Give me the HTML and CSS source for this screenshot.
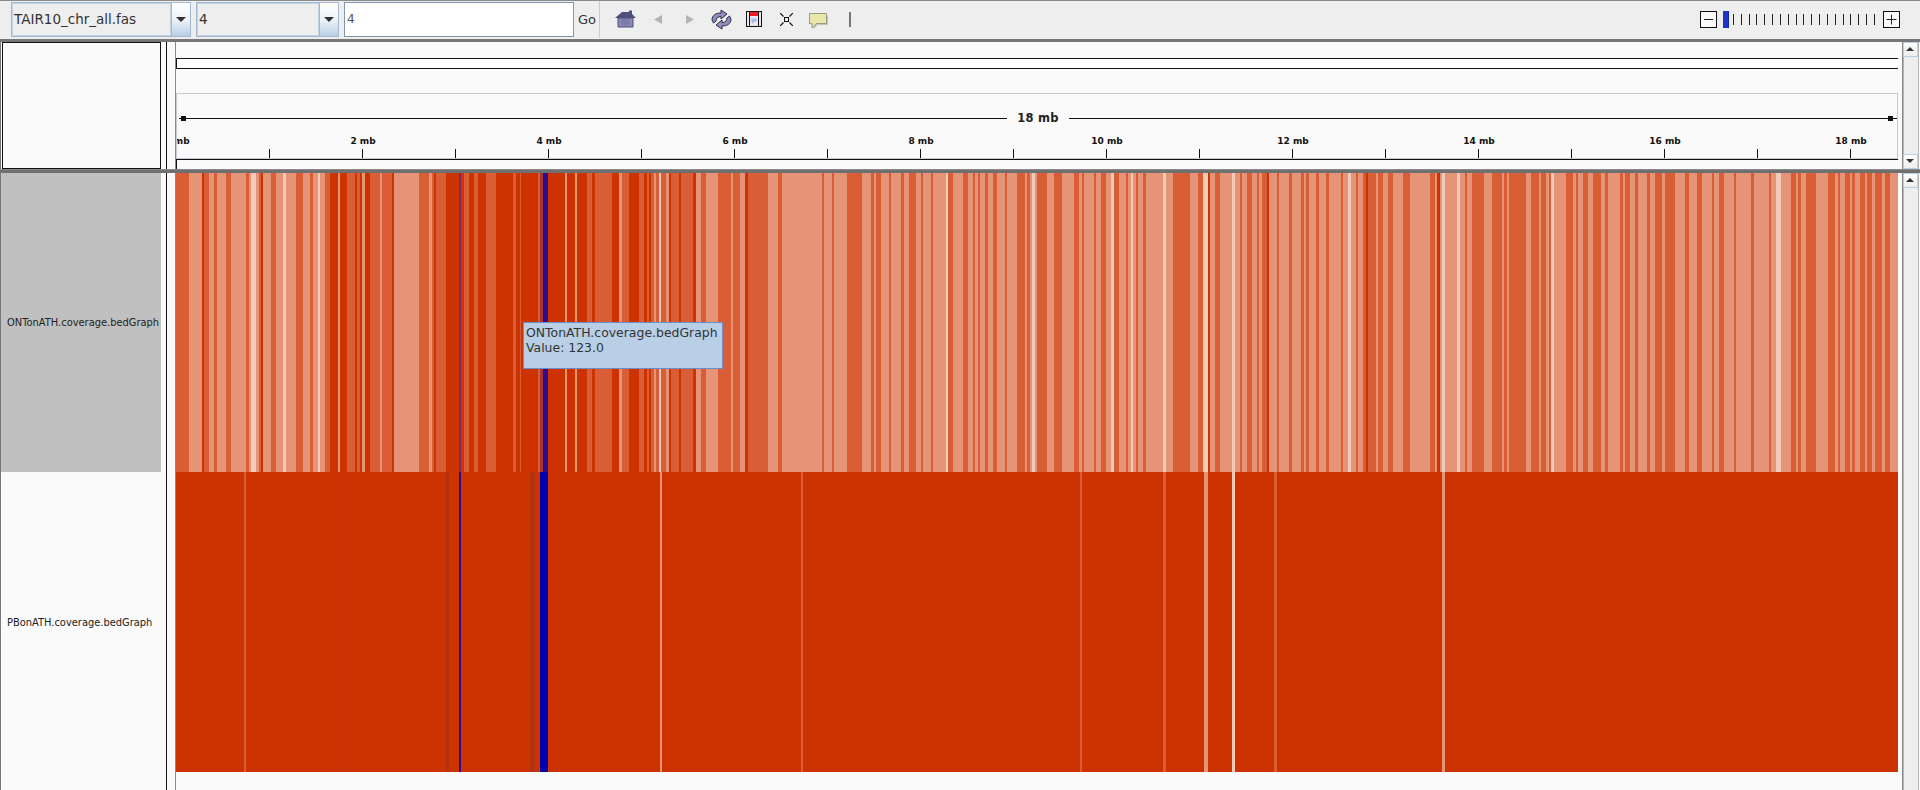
FILE: index.html
```html
<!DOCTYPE html>
<html lang="en">
<head>
  <meta charset="UTF-8" />
  <title>IGV</title>
  <link rel="stylesheet" href="styles.css">
</head>
<body>
  <div class="toolbar">
    <div class="combo combo-genome">
      <span class="combo-value">TAIR10_chr_all.fas</span>
      <span class="combo-arrow"></span>
    </div>
    <div class="combo combo-chr">
      <span class="combo-value">4</span>
      <span class="combo-arrow"></span>
    </div>
    <div class="locus">4</div>
    <div class="go">Go</div>

    <div class="tools">
      <svg class="icon" width="21" height="18" viewBox="0 0 21 18">
        <path d="M3 8h15v9H3z" fill="#8a8ab2" stroke="#4d4d78"/>
        <path d="M6 10h9M6 12h9M6 14h9" stroke="#6e6e9a"/>
        <path d="M0 8 L7 2 H14 V0.5 H17 V4 L21 8z" fill="#4f4f7c"/>
      </svg>
      <svg class="icon" width="8" height="9" viewBox="0 0 8 9"><path d="M8 0v9L0 4.500z" fill="#b4b4b4"/></svg>
      <svg class="icon" width="8" height="9" viewBox="0 0 8 9"><path d="M0 0v9l8-4.500z" fill="#b4b4b4"/></svg>
      <svg class="icon" width="21" height="21" viewBox="0 0 21 21">
        <path d="M1 11 C1 6 5 4 10 4 V1 L16 5 L10 10 V7.500 C7 7.500 5 9 5 12 L2.500 14z" fill="#8e8eb8" stroke="#2c2c4c"/>
        <path d="M20 10 C20 15 16 17 11 17 V20 L5 16 L11 11 V13.500 C14 13.500 16 12 16 9 L18.500 7z" fill="#8e8eb8" stroke="#2c2c4c"/>
      </svg>
      <svg class="icon" width="16" height="16" viewBox="0 0 16 16">
        <rect x="0.500" y="0.500" width="15" height="15" fill="#ece6f0" stroke="#111"/>
        <rect x="4" y="1" width="8" height="4" fill="#ee1c24"/>
        <path d="M5 7l3 1 2-1 1 3-3 1-2 2z" fill="#a8b8e0"/>
        <path d="M3.500 1v14M12.500 1v14" stroke="#111"/>
      </svg>
      <svg class="icon" width="13" height="13" viewBox="0 0 13 13">
        <rect x="4.500" y="4.500" width="4" height="4" fill="none" stroke="#111"/>
        <path d="M0 0l3.500 3.500M13 0L9.500 3.500M0 13l3.500-3.500M13 13L9.500 9.500" stroke="#111" stroke-width="1.200"/>
      </svg>
      <svg class="icon" width="19" height="16" viewBox="0 0 19 16">
        <path d="M2 2.500H19V12H9L4.500 16V12H2z" fill="#c4c4b4"/>
        <path d="M0.500 0.500H17.500V10.500H7.500L3 15V10.500H0.500z" fill="#e9e5ab" stroke="#9a9a80"/>
      </svg>
      <span class="tool-bar"></span>
    </div>

    <div class="zoom-control">
      <span class="zoom-btn">
        <svg width="17" height="17" viewBox="0 0 17 17"><path d="M4 8.500h9" stroke="#222"/></svg>
      </span>
      <span class="zoom-thumb"></span>
      <div class="zoom-ticks" id="zoomTicks"></div>
      <span class="zoom-btn">
        <svg width="17" height="17" viewBox="0 0 17 17"><path d="M3.500 8.500h10M8.500 3.500v10" stroke="#222"/></svg>
      </span>
    </div>
  </div>

  <div class="row row-header">
    <div class="names"><div class="names-box"></div></div>
    <div class="splitter"></div>
    <div class="header-main">
      <div class="cytoband"></div>
      <div class="ruler" id="ruler">
        <div class="span-line"><span class="span-label">18 mb</span></div>
      </div>
      <div class="feature-strip"></div>
    </div>
    <div class="scrollbar">
      <span class="scroll-btn scroll-up"></span>
      <span class="scroll-track"></span>
      <span class="scroll-btn scroll-down"></span>
    </div>
  </div>

  <div class="divider"></div>

  <div class="row row-data">
    <div class="names">
      <div class="track-name selected">ONTonATH.coverage.bedGraph</div>
      <div class="track-name">PBonATH.coverage.bedGraph</div>
    </div>
    <div class="splitter"></div>
    <div class="data-main">
      <div class="heat" id="trackOnt"></div>
      <div class="heat" id="trackPb"></div>
      <div class="tooltip">ONTonATH.coverage.bedGraph<br>Value: 123.0</div>
    </div>
    <div class="scrollbar">
      <span class="scroll-btn scroll-up"></span>
      <span class="scroll-track"></span>
    </div>
  </div>

  <script src="app.js"></script>
</body>
</html>
```

FILE: styles.css
```css
* {
  box-sizing: border-box;
}

html, body {
  height: 100%;
}

body {
  margin: 0;
  display: flex;
  flex-direction: column;
  overflow: hidden;
  background-color: #fafafa;
  font-family: "DejaVu Sans", sans-serif;
  color: #333;
}

/* toolbar */
.toolbar {
  height: 42px;
  flex: none;
  display: flex;
  align-items: center;
  padding: 0 0 2px 11px;
  background-color: #eeeeee;
  border-top: 1px solid #8a8a8a;
  border-bottom: 3px solid #777;
}

.combo {
  height: 35px;
  display: flex;
  background-color: #eeeeee;
  border: 1px solid #a3b8cc;
}

.combo-genome {
  width: 180px;
}

.combo-chr {
  width: 143px;
  margin-left: 5px;
}

.combo-value {
  flex: 1;
  padding-left: 1px;
  line-height: 31px;
  font-size: 13.500px;
  border: 1px solid #c4d4e6;
}

.combo-arrow {
  width: 19px;
  position: relative;
  background: linear-gradient(#ffffff, #eef3f8 50%, #b8cfe5);
  border-left: 1px solid #a3b8cc;
}

.combo-arrow::after {
  content: "";
  position: absolute;
  left: 4px;
  top: 14px;
  border-left: 5px solid transparent;
  border-right: 5px solid transparent;
  border-top: 5px solid #333;
}

.locus {
  width: 230px;
  height: 35px;
  margin-left: 5px;
  padding-left: 2px;
  line-height: 33px;
  font-size: 12px;
  color: #555;
  background-color: #fff;
  border: 1px solid #7e97ac;
}

.go {
  width: 26px;
  height: 37px;
  padding-left: 4px;
  line-height: 38px;
  font-size: 13px;
  border-right: 1px solid #ccc;
}

.tools {
  display: flex;
  align-items: center;
  margin-left: 15px;
}

.icon {
  display: block;
}

.icon:nth-child(2) { margin-left: 18px; }
.icon:nth-child(3) { margin-left: 24px; }
.icon:nth-child(4) { margin-left: 17px; }
.icon:nth-child(5) { margin-left: 14px; }
.icon:nth-child(6) { margin-left: 18px; }
.icon:nth-child(7) { margin-left: 16px; margin-top: 3px; }

.tool-bar {
  width: 2px;
  height: 15px;
  margin-left: 21px;
  background-color: #777;
}

.zoom-control {
  margin-left: auto;
  margin-right: 20px;
  display: flex;
  align-items: center;
}

.zoom-btn {
  width: 17px;
  height: 17px;
  background-color: #fafafa;
  outline: 1px solid #111;
  outline-offset: -1px;
}

.zoom-btn svg {
  display: block;
}

.zoom-thumb {
  width: 6px;
  height: 17px;
  margin-left: 6px;
  background-color: #1c34c8;
  border-right: 1px solid #14249a;
}

.zoom-ticks {
  width: 150px;
  height: 11px;
  margin-left: 4px;
  display: flex;
  justify-content: space-between;
  padding-right: 8px;
}

.zoom-ticks i {
  width: 1px;
  background-color: #222;
}

/* shared rows */
.row {
  display: flex;
  flex: none;
}

.row-header {
  height: 127px;
}

.row-data {
  flex: 1;
  min-height: 0;
}

.divider {
  height: 4px;
  flex: none;
  background-color: #6f6f6f;
  border-top: 1px solid #8a8a8a;
}

.names {
  width: 161px;
  flex: none;
  background-color: #fafafa;
  border-left: 1px solid #777;
}

.names-box {
  height: 100%;
  margin-left: 1px;
  background-color: #fafafa;
  border: 1px solid #111;
}

.splitter {
  width: 10px;
  flex: none;
  background-color: #fafafa;
  margin-left: 5px;
  border-left: 1px solid #111;
  border-right: 1px solid #8a8a8a;
}

.track-name {
  height: 300px;
  padding-left: 6px;
  display: flex;
  align-items: center;
  font-size: 9.900px;
  color: #222;
}

.track-name.selected {
  height: 299px;
  background-color: #c0c0c0;
}

/* header */
.header-main {
  width: 1722px;
  flex: none;
  display: flex;
  flex-direction: column;
}

.cytoband {
  height: 11px;
  margin-top: 16px;
  background-color: #fff;
  border-top: 1px solid #111;
  border-bottom: 1px solid #111;
  border-left: 1px solid #111;
}

.ruler {
  height: 66px;
  margin-top: 24px;
  position: relative;
  overflow: hidden;
  border: 1px solid #c8c8d0;
}

.span-line {
  position: absolute;
  left: 2px;
  right: 0;
  top: 24px;
  height: 1px;
  background-color: #111;
  display: flex;
  justify-content: center;
}

.span-line::before,
.span-line::after {
  content: "";
  position: absolute;
  top: -2px;
  width: 5px;
  height: 5px;
  background-color: #111;
}

.span-line::before { left: 2px; }
.span-line::after { right: 4px; }

.span-label {
  height: 16px;
  margin-top: -8px;
  padding: 0 10px;
  background-color: #fafafa;
  font-size: 11.500px;
  line-height: 16px;
  font-weight: bold;
  color: #222;
  letter-spacing: 0.300px;
}

.ruler-tick {
  position: absolute;
  bottom: 0;
  width: 1px;
  height: 9px;
  background-color: #111;
}

.ruler-label {
  position: absolute;
  top: 41px;
  width: 60px;
  margin-left: -30px;
  text-align: center;
  font-size: 9px;
  line-height: 12px;
  font-weight: bold;
  color: #111;
}

.feature-strip {
  height: 10px;
  border-top: 1px solid #111;
  border-left: 1px solid #111;
}

.scrollbar {
  width: 16px;
  flex: none;
  margin-left: 4px;
  display: flex;
  flex-direction: column;
  background-color: #eeeeee;
  border-left: 1px solid #8a8a8a;
  box-shadow: 1px 0 0 #b0b8c0;
}

.scroll-btn {
  height: 15px;
  flex: none;
  position: relative;
  background: linear-gradient(#ffffff, #eeeeee);
  border: 1px solid #b8cfe5;
}

.scroll-up::after,
.scroll-down::after {
  content: "";
  position: absolute;
  left: 2px;
  top: 4px;
  border-left: 4px solid transparent;
  border-right: 4px solid transparent;
}

.scroll-up::after { border-bottom: 4px solid #333; }
.scroll-down::after { border-top: 4px solid #333; }

.scroll-track {
  flex: 1;
  border-left: 1px solid #a3b8cc;
  background-color: #eeeeee;
}

/* data tracks */
.data-main {
  width: 1722px;
  flex: none;
  position: relative;
}

.heat {
  display: flex;
  height: 300px;
  overflow: hidden;
  background-color: #cc3300;
}

#trackOnt {
  height: 299px;
}

.heat span {
  flex: none;
  height: 100%;
}

.seg-a { background-color: #e59478; }
.seg-b { background-color: #d95e35; }
.seg-c { background-color: #cc3300; }
.seg-d { background-color: #f3cbbb; }
.seg-e { background-color: #c93303; }
.seg-f { background-color: #b5310e; }
.seg-p { background-color: #7e2a6a; }
.seg-r { background-color: #a83238; }
.seg-u { background-color: #2c0c8c; }
.seg-v { background-color: #0000b0; }

.tooltip {
  position: absolute;
  left: 347px;
  top: 149px;
  width: 200px;
  height: 47px;
  padding: 2px 1px 2px 2px;
  font-size: 12.450px;
  line-height: 15px;
  color: #333;
  background-color: #b8cfe5;
  border: 1px solid #6a8fc8;
}
```

FILE: app.js
```js
// run lengths read off the tracks: letter = colour, number = width in px
const ontRuns =
  'b13 a13 c2 b5 a5 b3 a9 b5 a15 b3 a2 d5 a3 b2 c2 a8 b5 a7 d3 a10 b7 a7 b3 a5 d2 a5 b5 c8 a2 c7 b8 c2 b3 c2 a3 c5 b10 a2 b10 c2 a25 b10 a3 b2 c2 b10 c13 p2 c3 b5 c5 b4 c8 b10 c17 b3 c4 b1 c17 b2 r3 u5 c17 a2 c8 a2 c10 b5 c3 b5 ' +
  'b12 c7 a3 b7 c10 b5 c3 b2 c2 b3 a2 b3 d2 b5 a3 c2 b8 c2 b12 c3 a5 b5 a12 b13 a2 b7 a5 c3 b20 a10 b4 a40 b2 a8 b2 a13 b15 a9 b3 a2 b5 a8 b2 a10 b3 a5 b7 a5 b2 a8 b2 a13 d2 b5 a10 b5 a5 b2 a3 b2 a5 b3 a5 b4 a8 b2 a10 b8 a2 b3 a2 d3 a2 b3 ' +
  'b7 a7 b8 a12 b5 a3 b2 a10 b2 a5 b5 a5 d3 b5 a7 b2 a3 d2 a3 b2 a5 b3 a17 d3 a7 b17 a8 b5 d5 c2 a5 b5 a12 d3 a5 b2 a5 b5 a5 b2 a3 b5 c2 a8 b2 a10 b3 a9 b3 a2 b3 a7 b3 a7 b3 a12 b2 a5 d3 a5 b2 a5 b3 c2 b8 a2 b5 a5 b5 a10 b7 a20 b5 a2 c3 a2 d3 a12 d3 a5 b2 a5 b8 ' +
  'b4 a8 b10 a2 b3 a2 b17 a5 b8 a2 b5 a3 b2 d3 a12 b7 a3 b2 a5 b5 a5 b8 a4 b3 a12 b3 a2 b5 a5 b3 a9 b3 a5 b7 a3 b10 a10 b4 a8 b5 a10 b2 a5 b5 a10 b2 a15 b3 a15 b2 a5 d5 a10 b5 a2 b3 a5 b10 a12 b7 a3 b2 a5 b5 a2 b3 a5 b5 a2 b5 a3 b7 a3 b5 a8';

const pbRuns =
  'c68 b2 c90 e9 c101 f3 c10 u2 c69 f5 c5 v8 c112 a2 c139 b2 c277 b2 c81 b3 c38 a4 c24 d3 c39 b3 c165 a3 c453';

function fillTrack(id, runs) {
  const track = document.getElementById(id);
  runs.split(' ').forEach(run => {
    const seg = document.createElement('span');
    seg.className = 'seg-' + run[0];
    seg.style.width = run.slice(1) + 'px';
    track.appendChild(seg);
  });
}

fillTrack('trackOnt', ontRuns);
fillTrack('trackPb', pbRuns);

// ruler: one tick per mb, label on the even ones
const ruler = document.getElementById('ruler');
const pxPerMb = 93;

for (let mb = 0; mb <= 18; mb++) {
  const x = mb * pxPerMb;
  if (mb > 0) {
    const tick = document.createElement('span');
    tick.className = 'ruler-tick';
    tick.style.left = x - 1 + 'px';
    ruler.appendChild(tick);
  }
  if (mb % 2 === 0) {
    const label = document.createElement('span');
    label.className = 'ruler-label';
    label.style.left = x + 'px';
    label.textContent = mb + ' mb';
    ruler.appendChild(label);
  }
}

const zoomTicks = document.getElementById('zoomTicks');
for (let i = 0; i < 19; i++) {
  zoomTicks.appendChild(document.createElement('i'));
}
```
